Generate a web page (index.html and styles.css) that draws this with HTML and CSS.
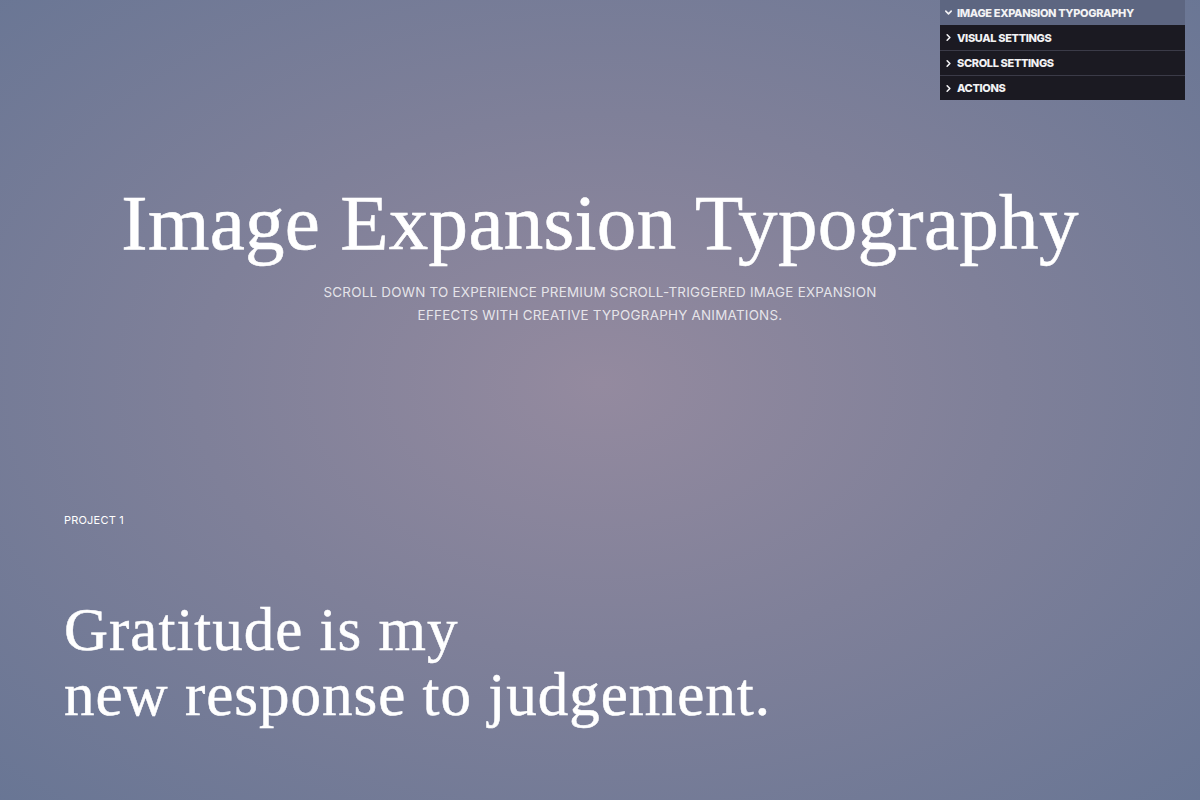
FILE: index.html
```html
<!DOCTYPE html>
<html lang="en">
<head>
<meta charset="utf-8">
<title>Image Expansion Typography</title>
<link rel="stylesheet" href="styles.css">
</head>
<body>
<main class="page">
  <header class="hero">
    <h1 class="hero-title">Image Expansion Typography</h1>
    <p class="hero-sub">Scroll down to experience premium scroll-triggered image expansion<br>effects with creative typography animations.</p>
  </header>

  <section class="project">
    <div class="project-label">Project 1</div>
    <h2 class="project-quote">Gratitude is my<br>new response to judgement.</h2>
  </section>
</main>

<aside class="gui">
  <div class="gui-title">
    <svg class="chev" viewBox="0 0 10 10" width="9" height="9"><path d="M2 3.5 L5 6.5 L8 3.5" fill="none" stroke="currentColor" stroke-width="1.8" stroke-linecap="round" stroke-linejoin="round"/></svg>
    <span>Image Expansion Typography</span>
  </div>
  <div class="gui-folder">
    <svg class="chev" viewBox="0 0 10 10" width="9" height="9"><path d="M3.5 2 L6.5 5 L3.5 8" fill="none" stroke="currentColor" stroke-width="1.8" stroke-linecap="round" stroke-linejoin="round"/></svg>
    <span>Visual Settings</span>
  </div>
  <div class="gui-folder">
    <svg class="chev" viewBox="0 0 10 10" width="9" height="9"><path d="M3.5 2 L6.5 5 L3.5 8" fill="none" stroke="currentColor" stroke-width="1.8" stroke-linecap="round" stroke-linejoin="round"/></svg>
    <span>Scroll Settings</span>
  </div>
  <div class="gui-folder">
    <svg class="chev" viewBox="0 0 10 10" width="9" height="9"><path d="M3.5 2 L6.5 5 L3.5 8" fill="none" stroke="currentColor" stroke-width="1.8" stroke-linecap="round" stroke-linejoin="round"/></svg>
    <span>Actions</span>
  </div>
</aside>
</body>
</html>
```
FILE: styles.css
```css
* { box-sizing: border-box; }

html, body {
  margin: 0;
  height: 100%;
}

body {
  background: radial-gradient(ellipse 75% 75% at 50% 48%, #948a9f 0%, #7f8099 45%, #677594 100%);
  color: #fff;
  font-family: Inter, "Noto Sans", sans-serif;
  overflow: hidden;
}

.page {
  height: 800px;
  display: flex;
  flex-direction: column;
}

.hero {
  padding-top: 180px;
  text-align: center;
}

.hero-title {
  margin: 0;
  font-family: "Liberation Serif", "Times New Roman", serif;
  font-weight: 400;
  font-size: 79px;
  line-height: 1.1;
  letter-spacing: 0.3px;
  -webkit-text-stroke: 0.6px #fff;
}

.hero-sub {
  margin: 14px 0 0;
  font-size: 13.4px;
  line-height: 23px;
  letter-spacing: 0.25px;
  text-transform: uppercase;
  color: rgba(255, 255, 255, 0.8);
}

.project {
  padding: 0 64px;
  margin-top: 186px;
}

.project-label {
  font-size: 11px;
  text-transform: uppercase;
  letter-spacing: 0.2px;
}

.project-quote {
  margin: 70px 0 0;
  font-family: "Liberation Serif", "Times New Roman", serif;
  font-weight: 400;
  font-size: 61px;
  line-height: 65px;
  letter-spacing: 1px;
  -webkit-text-stroke: 0.5px #fff;
}

.gui {
  position: absolute;
  top: 0;
  right: 15px;
  width: 245px;
  font-family: Inter, "Noto Sans", sans-serif;
  font-size: 11px;
  font-weight: 800;
  text-transform: uppercase;
  letter-spacing: -0.35px;
  color: #f2f2f4;
}

.gui-title,
.gui-folder {
  display: flex;
  align-items: center;
  gap: 4px;
  height: 25px;
  padding: 0 4px;
}

.gui-title {
  background: #5d6681;
}

.gui-folder {
  background: #1b1a22;
  border-top: 1px solid #3b3b48;
}

.gui-folder:nth-child(2) { border-top: none; }

.chev { flex: none; }
```
